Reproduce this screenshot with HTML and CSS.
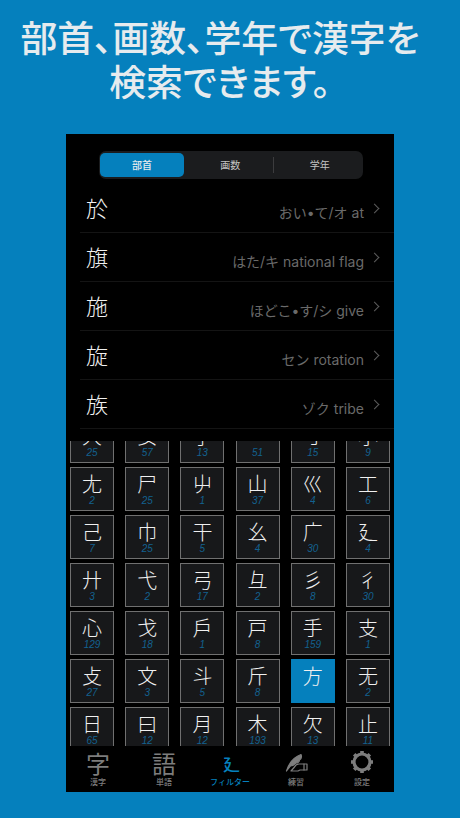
FILE: index.html
```html
<!DOCTYPE html>
<html lang="ja">
<head>
    <meta charset="UTF-8">
    <meta name="viewport" content="width=device-width, initial-scale=1.0">
    <title>部首、画数、学年で漢字を検索</title>
    <link rel="stylesheet" href="styles.css">
</head>
<body>
    <h1 class="headline">部首、画数、学年で漢字を<br>検索できます。</h1>

    <div class="phone">
        <div class="segments">
            <div class="segment active">部首</div>
            <div class="segment">画数</div>
            <div class="segment divided">学年</div>
        </div>

        <ul class="kanji-list">
            <li class="kanji-row"><span class="kanji">於</span><span class="meaning">おい•て/オ at</span><span class="chevron"></span></li>
            <li class="kanji-row"><span class="kanji">旗</span><span class="meaning">はた/キ national flag</span><span class="chevron"></span></li>
            <li class="kanji-row"><span class="kanji">施</span><span class="meaning">ほどこ•す/シ give</span><span class="chevron"></span></li>
            <li class="kanji-row"><span class="kanji">旋</span><span class="meaning">セン rotation</span><span class="chevron"></span></li>
            <li class="kanji-row"><span class="kanji">族</span><span class="meaning">ゾク tribe</span><span class="chevron"></span></li>
        </ul>

        <div class="radical-area">
            <div class="radical-grid">
                <div class="cell"><b>大</b><i>25</i></div>
                <div class="cell"><b>女</b><i>57</i></div>
                <div class="cell"><b>子</b><i>13</i></div>
                <div class="cell"><b>宀</b><i>51</i></div>
                <div class="cell"><b>寸</b><i>15</i></div>
                <div class="cell"><b>小</b><i>9</i></div>

                <div class="cell"><b>尢</b><i>2</i></div>
                <div class="cell"><b>尸</b><i>25</i></div>
                <div class="cell"><b>屮</b><i>1</i></div>
                <div class="cell"><b>山</b><i>37</i></div>
                <div class="cell"><b>巛</b><i>4</i></div>
                <div class="cell"><b>工</b><i>6</i></div>

                <div class="cell"><b>己</b><i>7</i></div>
                <div class="cell"><b>巾</b><i>25</i></div>
                <div class="cell"><b>干</b><i>5</i></div>
                <div class="cell"><b>幺</b><i>4</i></div>
                <div class="cell"><b>广</b><i>30</i></div>
                <div class="cell"><b>廴</b><i>4</i></div>

                <div class="cell"><b>廾</b><i>3</i></div>
                <div class="cell"><b>弋</b><i>2</i></div>
                <div class="cell"><b>弓</b><i>17</i></div>
                <div class="cell"><b>彑</b><i>2</i></div>
                <div class="cell"><b>彡</b><i>8</i></div>
                <div class="cell"><b>彳</b><i>30</i></div>

                <div class="cell"><b>心</b><i>129</i></div>
                <div class="cell"><b>戈</b><i>18</i></div>
                <div class="cell"><b>戶</b><i>1</i></div>
                <div class="cell"><b>戸</b><i>8</i></div>
                <div class="cell"><b>手</b><i>159</i></div>
                <div class="cell"><b>支</b><i>1</i></div>

                <div class="cell"><b>攴</b><i>27</i></div>
                <div class="cell"><b>文</b><i>3</i></div>
                <div class="cell"><b>斗</b><i>5</i></div>
                <div class="cell"><b>斤</b><i>8</i></div>
                <div class="cell selected"><b>方</b><i></i></div>
                <div class="cell"><b>无</b><i>2</i></div>

                <div class="cell"><b>日</b><i>65</i></div>
                <div class="cell"><b>曰</b><i>12</i></div>
                <div class="cell"><b>月</b><i>12</i></div>
                <div class="cell"><b>木</b><i>193</i></div>
                <div class="cell"><b>欠</b><i>13</i></div>
                <div class="cell"><b>止</b><i>11</i></div>
            </div>
        </div>

        <nav class="tabbar">
            <div class="tab"><span class="tab-glyph">字</span><span class="tab-label">漢字</span></div>
            <div class="tab"><span class="tab-glyph">語</span><span class="tab-label">単語</span></div>
            <div class="tab current"><span class="tab-glyph">廴</span><span class="tab-label">フィルター</span></div>
            <div class="tab">
                <svg class="tab-icon" viewBox="0 0 24 24" fill="none" stroke="#7d7d7d" stroke-width="1.2" stroke-linejoin="round" stroke-linecap="round">
                    <path d="M2.5 21 C5 13 10 7 17 4.5 C18 7 17 9 15.5 10 C15.5 12 13.5 13 12 13 C10 15 8 16 6.5 16 Z" fill="#7d7d7d" />
                    <path d="M7 21 L10.5 17 C11.5 15 13 14 15 14 L23 14 L23 20 L16 20 L14 21 Z" />
                    <path d="M20 14 L20 20" />
                </svg>
                <span class="tab-label">練習</span>
            </div>
            <div class="tab">
                <svg class="tab-icon" viewBox="0 0 24 24" fill="none" stroke="#7d7d7d">
                    <circle cx="12" cy="12" r="8" stroke-width="3.2" />
                    <path d="M12 1 V4 M12 20 V23 M1 12 H4 M20 12 H23 M4.2 4.2 L6.4 6.4 M17.6 17.6 L19.8 19.8 M4.2 19.8 L6.4 17.6 M17.6 6.4 L19.8 4.2" stroke-width="3.6" />
                </svg>
                <span class="tab-label">設定</span>
            </div>
        </nav>
    </div>
</body>
</html>
```

FILE: styles.css
```css
* {
    box-sizing: border-box;
}
body {
    margin: 0;
    height: 818px;
    overflow: hidden;
    background-color: #0580bd;
    font-family: "Noto Sans CJK JP", sans-serif;
}
.headline {
    margin: 0;
    padding: 14px 20px 0 0;
    height: 134px;
    font-size: 36.8px;
    line-height: 44px;
    font-weight: 500;
    text-align: center;
    color: #e6ebee;
    font-feature-settings: "palt";
}
.phone {
    display: flex;
    flex-direction: column;
    width: 328px;
    height: 658px;
    margin-left: 66px;
    background: #000;
}

/* segmented control */
.segments {
    display: flex;
    align-items: center;
    width: 264px;
    height: 28px;
    margin: 17px 0 5px 33px;
    padding: 0 1px;
    background: #1b1c1e;
    border-radius: 7px;
}
.segment {
    flex: 1;
    height: 24px;
    padding-left: 4px;
    line-height: 24px;
    text-align: center;
    font-size: 10px;
    color: #c4c4c4;
}
.segment.active {
    flex: none;
    width: 84px;
    padding-left: 0;
    background: #0580bd;
    border-radius: 5px;
    color: #e6ebee;
    font-weight: 500;
}
.segment.divided {
    height: 16px;
    line-height: 16px;
    border-left: 1px solid #3c3c3e;
}

/* kanji rows */
.kanji-list {
    list-style: none;
    margin: 0 0 0 14px;
    padding: 0;
}
.kanji-row {
    display: flex;
    align-items: center;
    height: 49px;
    padding-left: 6px;
    border-bottom: 1px solid #141414;
}
.kanji {
    margin-top: -2px;
    font-size: 22px;
    font-weight: 300;
    color: #f0f0f0;
}
.meaning {
    margin-left: auto;
    padding-top: 7px;
    font-family: Inter, "Noto Sans CJK JP", sans-serif;
    font-size: 14px;
    color: #6a6a6a;
}
.chevron {
    width: 7px;
    height: 7px;
    margin: 0 16px 0 7px;
    border-top: 1px solid #5c5c5c;
    border-right: 1px solid #5c5c5c;
    transform: rotate(45deg);
}

/* radical grid */
.radical-area {
    flex: 1;
    margin-top: 12px;
    overflow: hidden;
}
.radical-grid {
    display: grid;
    grid-template-columns: repeat(6, 44px);
    grid-auto-rows: 44px;
    justify-content: space-between;
    row-gap: 4px;
    width: 320px;
    margin: -22px 0 0 4px;
}
.cell {
    display: flex;
    flex-direction: column;
    align-items: center;
    padding-top: 3px;
    background: #17181a;
    border: 1px solid #707070;
}
.cell b {
    height: 25px;
    font-size: 20px;
    line-height: 25px;
    font-weight: 300;
    color: #f0f0f0;
}
.cell i {
    font-family: "Liberation Sans", sans-serif;
    font-size: 10px;
    line-height: 10px;
    color: #13618f;
}
.cell.selected {
    background: #0580bd;
    border-color: #0580bd;
}

/* tab bar */
.tabbar {
    display: flex;
    height: 46px;
    margin-left: -1px;
}
.tab {
    flex: 0 0 66px;
    display: flex;
    flex-direction: column;
    align-items: center;
    padding-top: 4px;
}
.tab-glyph {
    height: 26px;
    font-size: 24px;
    line-height: 26px;
    font-weight: 400;
    color: #7d7d7d;
}
.tab-icon {
    width: 24px;
    height: 24px;
    margin-bottom: 2px;
}
.tab-label {
    font-size: 8px;
    line-height: 12px;
    font-weight: 500;
    color: #7d7d7d;
}
.tab.current .tab-glyph {
    padding: 1px 0 0 3px;
    font-size: 17px;
    font-weight: 500;
    color: #0580bd;
}
.tab.current .tab-label {
    color: #0580bd;
}
```
